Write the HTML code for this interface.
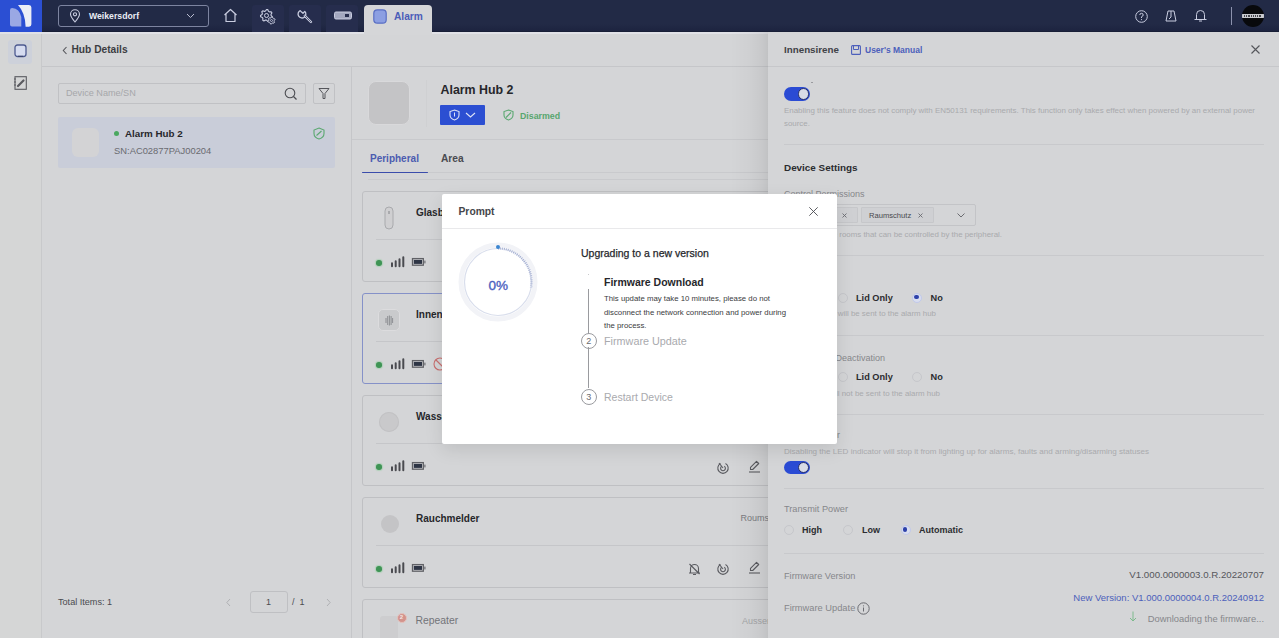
<!DOCTYPE html>
<html><head><meta charset="utf-8">
<style>
*{box-sizing:border-box;margin:0;padding:0}
html,body{width:1279px;height:638px;overflow:hidden;background:#d4d5d7;font-family:"Liberation Sans",sans-serif;color:#2b2c30}
.a{position:absolute}
.t{position:absolute;white-space:nowrap;line-height:1}
svg{position:absolute;overflow:visible}
.hdr{left:0;top:0;width:1279px;height:32px;background:linear-gradient(#222a46 0,#222a46 75%,#1d2440 95%,#161c32 100%)}
.logo{left:0;top:0;width:42px;height:32px;background:#2b4fd3}
.htab{top:5px;width:32px;height:27px;background:#262d4d;border-radius:3px 3px 0 0}
.side{left:0;top:32px;width:42px;height:606px;background:#d5d6d6;border-right:1px solid #c8c9cb}
.hl{position:absolute;height:1px;background:#c5c6c9}
.vl{position:absolute;width:1px;background:#c5c6c9}
.card{position:absolute;left:362px;width:440px;height:91px;border:1px solid #bfc0c3;border-radius:3px}
.drawer{left:768px;top:32px;width:511px;height:606px;background:#d4d5d7}
.dshadow{left:730px;top:32px;width:38px;height:606px;background:linear-gradient(to right,rgba(0,0,0,0),rgba(0,0,0,0.025) 50%,rgba(0,0,0,0.06) 85%,rgba(0,0,0,0.09))}
.modal{left:442px;top:193.6px;width:395px;height:250.8px;background:#fff;border-radius:2px;box-shadow:0 6px 18px rgba(0,0,0,0.10)}
.radio{position:absolute;width:10px;height:10px;border-radius:50%;border:1px solid #c6c7cb;margin:0.5px}
.radio.on{border:1.5px solid #c1c9ea;background:#d9deef}
.radio.on:after{content:"";position:absolute;left:1.25px;top:1.25px;width:4.5px;height:4.5px;border-radius:50%;background:#2d41aa}
.tog{position:absolute;width:26.5px;height:13.5px;border-radius:7px;background:#2a4bd4}
.tog:after{content:"";position:absolute;right:1px;top:1px;width:11.5px;height:11.5px;box-sizing:border-box;border-radius:50%;background:#d8dbe6;border:1px solid #27306a}
.gdot{position:absolute;width:5px;height:5px;border-radius:50%;background:#4aa860}
.help{color:#a9aaad;font-size:6.5px}
.lbl{color:#86878b;font-size:9.2px}
.opt{color:#2b2c30;font-size:8.6px;font-weight:bold}
</style></head><body>
<!-- ============ HEADER ============ -->
<div class="a hdr"></div>
<div class="a logo"></div>
<svg style="left:0;top:0" width="42" height="32" viewBox="0 0 42 32">
  <path d="M10 26.4 L10 10.2 Q10 8 12.2 8 Q19.5 8.6 21.3 17 L21.3 26.4 L12 26.4 Q10 26.4 10 24.5 Z" fill="#9aa8e4"/>
  <path d="M18 5 L29 5 Q31.4 5 31.4 7.5 L31.4 24.3 Q31.4 26.7 29 26.7 L25.6 26.7 Q25.4 13 18 5 Z" fill="#eceef6"/>
</svg>
<div class="a" style="left:58px;top:5px;width:151px;height:22px;border:1px solid #7d84a0;border-radius:3px"></div>
<svg style="left:69px;top:9px" width="12" height="14" viewBox="0 0 12 14">
  <path d="M6 13 C3 9.5 1.5 7.5 1.5 5.3 A4.5 4.5 0 0 1 10.5 5.3 C10.5 7.5 9 9.5 6 13 Z" fill="none" stroke="#c9cde0" stroke-width="1.1"/>
  <circle cx="6" cy="5.3" r="1.6" fill="none" stroke="#c9cde0" stroke-width="1.1"/>
</svg>
<div class="t" style="left:89px;top:12px;font-size:8.7px;font-weight:bold;color:#eceef5">Weikersdorf</div>
<svg style="left:186px;top:13px" width="9" height="6" viewBox="0 0 9 6"><path d="M1 1 L4.5 4.5 L8 1" fill="none" stroke="#b9bdd0" stroke-width="1"/></svg>

<svg style="left:223px;top:8px" width="15" height="15" viewBox="0 0 15 15">
  <path d="M1.5 7 L7.5 1.5 L13.5 7 M3 6 L3 13.5 L12 13.5 L12 6" fill="none" stroke="#c9cde0" stroke-width="1.2" stroke-linejoin="round"/>
</svg>
<div class="a htab" style="left:252px"></div>
<div class="a htab" style="left:289px"></div>
<div class="a htab" style="left:326px"></div>
<svg style="left:260px;top:9px" width="16" height="16" viewBox="0 0 16 16">
  <path d="M11.10 6.50 L12.35 7.84 L11.91 9.10 L10.10 9.37 L9.37 10.10 L9.10 11.91 L7.84 12.35 L6.50 11.10 L5.48 10.98 L3.90 11.91 L2.76 11.19 L2.90 9.37 L2.36 8.50 L0.65 7.84 L0.50 6.50 L2.02 5.48 L2.36 4.50 L1.81 2.76 L2.76 1.81 L4.50 2.36 L5.48 2.02 L6.50 0.50 L7.84 0.65 L8.50 2.36 L9.37 2.90 L11.19 2.76 L11.91 3.90 L10.98 5.48 Z" fill="none" stroke="#c9cde0" stroke-width="1.1" stroke-linejoin="round"/>
  <circle cx="6.5" cy="6.5" r="2" fill="none" stroke="#c9cde0" stroke-width="1"/>
  <path d="M14.08 12.30 L14.55 13.42 L13.95 14.14 L12.76 13.89 L12.10 14.13 L11.36 15.10 L10.44 14.94 L10.06 13.79 L9.52 13.33 L8.32 13.18 L7.99 12.30 L8.80 11.40 L8.92 10.70 L8.45 9.58 L9.05 8.86 L10.24 9.11 L10.90 8.87 L11.64 7.90 L12.56 8.06 L12.94 9.21 L13.48 9.67 L14.68 9.82 L15.01 10.70 L14.20 11.60 Z" fill="#262d4d" stroke="#c9cde0" stroke-width="1" stroke-linejoin="round"/>
  <circle cx="11.5" cy="11.5" r="1" fill="none" stroke="#c9cde0" stroke-width="0.8"/>
</svg>
<svg style="left:298px;top:9px" width="15" height="15" viewBox="0 0 15 15">
  <path d="M2.2 1.6 A3.9 3.9 0 1 0 6.8 2.4 L5 4.3 L3.6 3.1 Z" fill="none" stroke="#c9cde0" stroke-width="1.3" stroke-linejoin="round"/>
  <path d="M6.8 6.8 L13 13" stroke="#c9cde0" stroke-width="2.4" stroke-linecap="round"/>
  <path d="M6.8 6.8 L13 13" stroke="#262d4d" stroke-width="0.7" stroke-linecap="round"/>
</svg>
<svg style="left:334px;top:11px" width="18" height="9" viewBox="0 0 18 9">
  <rect x="0.5" y="1" width="17" height="7" rx="1.5" fill="#a3a8bf" stroke="#c9cde0" stroke-width="1"/>
  <rect x="11" y="3" width="4" height="3" fill="#262d4d"/>
</svg>
<div class="a" style="left:364px;top:5px;width:68px;height:30px;background:#d5d6d8;border-radius:4px 4px 0 0;z-index:2"></div>
<svg style="left:373px;top:9px;z-index:3" width="14" height="15" viewBox="0 0 14 15">
  <rect x="0.8" y="0.8" width="12.4" height="13.4" rx="3.5" fill="#8c9fe2" stroke="#5a6fc4" stroke-width="1.2"/>
</svg>
<div class="t" style="z-index:3;left:394px;top:12.2px;font-size:10.2px;font-weight:bold;color:#4b5db8">Alarm</div>

<svg style="left:1135px;top:10px" width="13" height="13" viewBox="0 0 13 13">
  <circle cx="6.5" cy="6.5" r="5.8" fill="none" stroke="#c9cde0" stroke-width="1"/>
  <path d="M4.8 5 Q4.8 3.3 6.5 3.3 Q8.2 3.3 8.2 5 Q8.2 6.2 6.5 6.8 L6.5 8" fill="none" stroke="#c9cde0" stroke-width="1"/>
  <circle cx="6.5" cy="9.6" r="0.6" fill="#c9cde0"/>
</svg>
<svg style="left:1165px;top:10px" width="12" height="12" viewBox="0 0 12 12">
  <path d="M3 1 L9 1 L11 11 L1 11 Z M6 1 L6 7 L4 9" fill="none" stroke="#c9cde0" stroke-width="1"/>
</svg>
<svg style="left:1194px;top:8.3px" width="13" height="14" viewBox="0 0 13 14">
  <path d="M2.5 11 L2.5 6.5 A4 4 0 0 1 10.5 6.5 L10.5 11 M0.5 11.5 L12.5 11.5 M5 13 L8 13" fill="none" stroke="#c9cde0" stroke-width="1"/>
</svg>
<div class="a" style="left:1231px;top:7px;width:1px;height:18px;background:#8c92ad"></div>
<div class="a" style="left:1242px;top:5px;width:22px;height:22px;border-radius:50%;background:#08090c;overflow:hidden">
  <div class="a" style="left:0;top:8.5px;width:22px;height:4.5px;background:#c9cacf"></div><div class="a" style="left:2px;top:9.8px;width:18px;height:2px;background:repeating-linear-gradient(to right,#45464c 0,#45464c 1.2px,transparent 1.2px,transparent 2.2px)"></div>
</div>

<!-- ============ SIDEBAR ============ -->
<div class="a side"></div>
<div class="a" style="left:0;top:32px;width:1279px;height:2px;background:#e0e1e6"></div>
<div class="a" style="left:8px;top:40px;width:24px;height:24px;border-radius:3px;background:#cdd1da"></div>
<svg style="left:14px;top:44px" width="13" height="13" viewBox="0 0 13 13">
  <rect x="1" y="1" width="11" height="11.5" rx="2.5" fill="#d6dcf0" stroke="#4d5a90" stroke-width="1.3"/><path d="M4 12.4 L9 12.4" stroke="#3d4770" stroke-width="1.2"/>
</svg>
<svg style="left:14px;top:76px" width="13" height="14" viewBox="0 0 13 14">
  <rect x="1" y="0.7" width="11.3" height="12.6" fill="none" stroke="#5a5b60" stroke-width="1.1"/>
  <path d="M4 10 L9.5 4.5" stroke="#5a5b60" stroke-width="2.2" stroke-linecap="round"/>
  <path d="M0 3 L2 3 M0 6 L2 6 M0 9 L2 9" stroke="#5a5b60" stroke-width="1"/>
</svg>

<!-- ============ MAIN ============ -->
<svg style="left:62px;top:45.5px" width="6" height="9" viewBox="0 0 6 9"><path d="M4.5 1 L1.3 4.5 L4.5 8" fill="none" stroke="#55565b" stroke-width="1.1"/></svg>
<div class="t" style="left:71.5px;top:44.5px;font-size:10.2px;font-weight:bold;color:#3c3d42">Hub Details</div>
<div class="hl" style="left:42px;top:66px;width:726px"></div>
<div class="vl" style="left:351px;top:67px;height:571px"></div>

<!-- search -->
<div class="a" style="left:58px;top:83px;width:248px;height:21px;border:1px solid #c0c1c4;border-radius:2px"></div>
<div class="t" style="left:66px;top:89px;font-size:9.1px;color:#a6a7aa">Device Name/SN</div>
<svg style="left:284px;top:87px" width="14" height="14" viewBox="0 0 14 14"><circle cx="6" cy="6" r="4.8" fill="none" stroke="#4c4d52" stroke-width="1.1"/><path d="M9.5 9.5 L12.5 12.5" stroke="#4c4d52" stroke-width="1.2"/></svg>
<div class="a" style="left:313px;top:83px;width:22px;height:21px;border:1px solid #c0c1c4;border-radius:2px"></div>
<svg style="left:318px;top:87px" width="12" height="13" viewBox="0 0 12 13"><path d="M1 1.5 L11 1.5 L7 6.5 L7 11.5 L5 11.5 L5 6.5 Z" fill="none" stroke="#55565b" stroke-width="1" stroke-linejoin="round"/></svg>

<!-- hub list item -->
<div class="a" style="left:58px;top:117px;width:277px;height:51px;background:#c9cdd9;border-radius:2px"></div>
<div class="a" style="left:72px;top:128px;width:27px;height:29px;border-radius:6px;background:#d3d3d5"></div>
<div class="gdot" style="left:113.5px;top:131px"></div>
<div class="t" style="left:125px;top:129px;font-size:9.8px;font-weight:bold;color:#26272b">Alarm Hub 2</div>
<div class="t" style="left:114px;top:146px;font-size:9.4px;color:#6a6b70">SN:AC02877PAJ00204</div>
<svg style="left:313px;top:127px" width="12" height="13" viewBox="0 0 12 13"><path d="M6 1 L11 3 L11 6.5 Q11 10.5 6 12 Q1 10.5 1 6.5 L1 3 Z M3.5 8.5 L8.5 4" fill="none" stroke="#5aa870" stroke-width="1.1"/></svg>

<!-- pagination -->
<div class="t" style="left:58px;top:598.3px;font-size:9.1px;color:#4a4b50">Total Items: 1</div>
<svg style="left:225px;top:598px" width="7" height="9" viewBox="0 0 7 9"><path d="M5 1 L1.8 4.5 L5 8" fill="none" stroke="#b0b1b4" stroke-width="1"/></svg>
<div class="a" style="left:250px;top:591px;width:38px;height:22px;border:1px solid #bfc0c3;border-radius:3px"></div>
<div class="t" style="left:266px;top:598.3px;font-size:9px;color:#4a4b50">1</div>
<div class="t" style="left:292px;top:598.3px;font-size:9px;color:#4a4b50">/&nbsp;&nbsp;1</div>
<svg style="left:325px;top:598px" width="7" height="9" viewBox="0 0 7 9"><path d="M2 1 L5.2 4.5 L2 8" fill="none" stroke="#b0b1b4" stroke-width="1"/></svg>

<!-- hub header -->
<div class="a" style="left:367.5px;top:80.5px;width:42px;height:44px;border-radius:8px;background:#c4c4c6;border:1px solid #d9d9db"></div>
<div class="vl" style="left:426px;top:80px;height:47px;background:#cfd0d2"></div>
<div class="t" style="left:440.5px;top:84px;font-size:12.4px;font-weight:bold;color:#26272b">Alarm Hub 2</div>
<div class="a" style="left:440px;top:105px;width:45px;height:20px;background:#2c4fd2;border-radius:1px"></div>
<svg style="left:449px;top:109px" width="28" height="12" viewBox="0 0 28 12"><path d="M5.5 1 L10 2.6 L10 6 Q10 9.5 5.5 11 Q1 9.5 1 6 L1 2.6 Z" fill="none" stroke="#dfe4f7" stroke-width="1.1"/><path d="M5.5 3.5 L5.5 7.5" stroke="#dfe4f7" stroke-width="1"/><path d="M17 4 L21.5 8 L26 4" fill="none" stroke="#dfe4f7" stroke-width="1.1"/></svg>
<svg style="left:503px;top:109px" width="11" height="12" viewBox="0 0 11 12"><path d="M5.5 1 L10 2.6 L10 6 Q10 9.5 5.5 11 Q1 9.5 1 6 L1 2.6 Z M3 8.5 L8 3.5" fill="none" stroke="#5aa870" stroke-width="1.1"/></svg>
<div class="t" style="left:520px;top:111.7px;font-size:8.8px;font-weight:bold;color:#58a66e">Disarmed</div>
<div class="hl" style="left:352px;top:139px;width:416px;background:#c8c9cc"></div>

<!-- tabs -->
<div class="t" style="left:370px;top:153.5px;font-size:10px;font-weight:bold;color:#4b5cb0">Peripheral</div>
<div class="t" style="left:441px;top:153.5px;font-size:10.2px;font-weight:bold;color:#4a4b50">Area</div>
<div class="hl" style="left:362px;top:172px;width:406px;background:#c9cacd"></div>
<div class="a" style="left:362px;top:171.7px;width:66px;height:1.8px;border-radius:1px;background:#3a4cab"></div>
<div class="hl" style="left:368px;top:179px;width:400px;background:#c9cacd"></div>

<!-- cards -->
<div class="card" style="top:191px"></div>
<div class="hl" style="left:376px;top:239px;width:400px"></div>
<svg style="left:384px;top:206px" width="10" height="24" viewBox="0 0 10 24"><rect x="1" y="1" width="8" height="22" rx="4" fill="#cfcfd1" stroke="#a9aaad" stroke-width="1"/><rect x="4" y="5" width="2" height="3" fill="#a9aaad"/></svg>
<div class="t" style="left:416px;top:208.2px;font-size:10px;font-weight:bold;color:#26272b">Glasbruchmelder</div>
<div class="gdot" style="left:376.2px;top:260.3px;width:5.5px;height:5.5px;background:#3f9455;box-shadow:0 0 1px 1px rgba(110,200,130,0.35)"></div><svg style="left:390px;top:255px" width="38" height="14" viewBox="0 0 38 14"><path d="M2 11.2 L2 8.2 M5.7 11.2 L5.7 6.3 M9.5 11.2 L9.5 4.2 M13.3 11.2 L13.3 2.2" stroke="#4a4b50" stroke-width="2" stroke-linecap="round"/><rect x="22.5" y="3.6" width="10.8" height="6.6" fill="none" stroke="#606166" stroke-width="1.3"/><rect x="23.8" y="4.9" width="8.2" height="4" fill="#2e3545"/><rect x="34" y="5.6" width="1.7" height="2.8" fill="#8a8b8f"/></svg>


<div class="card" style="top:293px;border-color:#8591c8"></div>
<div class="hl" style="left:376px;top:341px;width:400px"></div>
<div class="a" style="left:378px;top:309px;width:22px;height:22px;border-radius:5px;background:#c9cacc;border:1px solid #dcdcde"></div>
<svg style="left:383px;top:313px" width="12" height="14" viewBox="0 0 12 14"><path d="M3 5 L3 10 M4.7 3 L4.7 12 M6.4 2.5 L6.4 12.5 M8.1 3 L8.1 12 M9.6 5 L9.6 10" stroke="#7e7f84" stroke-width="0.8"/></svg>
<div class="t" style="left:416px;top:310.2px;font-size:10px;font-weight:bold;color:#26272b">Innensirene</div>
<div class="gdot" style="left:376.2px;top:362.3px;width:5.5px;height:5.5px;background:#3f9455;box-shadow:0 0 1px 1px rgba(110,200,130,0.35)"></div><svg style="left:390px;top:357px" width="38" height="14" viewBox="0 0 38 14"><path d="M2 11.2 L2 8.2 M5.7 11.2 L5.7 6.3 M9.5 11.2 L9.5 4.2 M13.3 11.2 L13.3 2.2" stroke="#4a4b50" stroke-width="2" stroke-linecap="round"/><rect x="22.5" y="3.6" width="10.8" height="6.6" fill="none" stroke="#606166" stroke-width="1.3"/><rect x="23.8" y="4.9" width="8.2" height="4" fill="#2e3545"/><rect x="34" y="5.6" width="1.7" height="2.8" fill="#8a8b8f"/></svg>

<svg style="left:433px;top:357px" width="14" height="14" viewBox="0 0 14 14"><circle cx="7" cy="7" r="6" fill="none" stroke="#c86e6e" stroke-width="1.1"/><path d="M3 3 L11 11" stroke="#c86e6e" stroke-width="1.1"/></svg>

<div class="card" style="top:395px"></div>
<div class="hl" style="left:376px;top:443px;width:400px"></div>
<div class="a" style="left:379px;top:412px;width:20px;height:20px;border-radius:50%;background:#c9c9cb;box-shadow:inset 0 0 0 1px #c2c2c4"></div>
<div class="t" style="left:416px;top:412.2px;font-size:10px;font-weight:bold;color:#26272b">Wassermelder</div>
<div class="gdot" style="left:376.2px;top:464.3px;width:5.5px;height:5.5px;background:#3f9455;box-shadow:0 0 1px 1px rgba(110,200,130,0.35)"></div><svg style="left:390px;top:459px" width="38" height="14" viewBox="0 0 38 14"><path d="M2 11.2 L2 8.2 M5.7 11.2 L5.7 6.3 M9.5 11.2 L9.5 4.2 M13.3 11.2 L13.3 2.2" stroke="#4a4b50" stroke-width="2" stroke-linecap="round"/><rect x="22.5" y="3.6" width="10.8" height="6.6" fill="none" stroke="#606166" stroke-width="1.3"/><rect x="23.8" y="4.9" width="8.2" height="4" fill="#2e3545"/><rect x="34" y="5.6" width="1.7" height="2.8" fill="#8a8b8f"/></svg>


<div class="card" style="top:497px"></div>
<div class="hl" style="left:376px;top:545px;width:400px"></div>
<div class="a" style="left:381px;top:515px;width:18px;height:18px;border-radius:50%;background:#c4c4c6"></div>
<div class="t" style="left:416px;top:514.2px;font-size:10px;font-weight:bold;color:#26272b">Rauchmelder</div>
<div class="t" style="left:740.5px;top:514px;font-size:9px;color:#7a7b80">Roumschutz</div>
<div class="gdot" style="left:376.2px;top:566.3px;width:5.5px;height:5.5px;background:#3f9455;box-shadow:0 0 1px 1px rgba(110,200,130,0.35)"></div><svg style="left:390px;top:561px" width="38" height="14" viewBox="0 0 38 14"><path d="M2 11.2 L2 8.2 M5.7 11.2 L5.7 6.3 M9.5 11.2 L9.5 4.2 M13.3 11.2 L13.3 2.2" stroke="#4a4b50" stroke-width="2" stroke-linecap="round"/><rect x="22.5" y="3.6" width="10.8" height="6.6" fill="none" stroke="#606166" stroke-width="1.3"/><rect x="23.8" y="4.9" width="8.2" height="4" fill="#2e3545"/><rect x="34" y="5.6" width="1.7" height="2.8" fill="#8a8b8f"/></svg>


<div class="card" style="top:599px"></div>
<div class="a" style="left:380px;top:616px;width:18px;height:26px;border-radius:3px;background:#cdcdcf"></div>
<div class="a" style="left:396.5px;top:612.5px;width:10px;height:10px;border-radius:50%;background:#d3938c;border:1.5px solid #e3c1bc;color:#f4e6e4;font-size:6px;line-height:7px;text-align:center;font-weight:bold">2</div>
<div class="t" style="left:415.5px;top:615.8px;font-size:10.4px;color:#737479">Repeater</div>
<div class="t" style="left:742px;top:616.5px;font-size:9px;color:#a4a5a8">Aussen</div>


<svg style="left:716px;top:462px" width="14" height="12" viewBox="0 0 14 12"><path d="M4.5 1.6 A5.2 5.2 0 1 0 9.5 1.6" fill="none" stroke="#5a5b60" stroke-width="1.1"/><path d="M5.7 4.3 A2.4 2.4 0 1 0 8.3 4.3" fill="none" stroke="#5a5b60" stroke-width="1.1"/><path d="M3 1 L7 6" stroke="#5a5b60" stroke-width="1.1"/></svg><svg style="left:748px;top:460px" width="13" height="13" viewBox="0 0 13 13"><path d="M2.5 9.5 L2.5 7.3 L8.5 1.3 L10.7 3.5 L4.7 9.5 Z" fill="none" stroke="#5a5b60" stroke-width="1.1" stroke-linejoin="round"/><path d="M1 12 L12 12" stroke="#5a5b60" stroke-width="1.1"/></svg><svg style="left:688px;top:563px" width="13" height="12" viewBox="0 0 13 12"><path d="M2.5 9.5 L2.5 5.5 A4 4 0 0 1 10.5 5.5 L10.5 9.5 M1 10 L12 10 M5 11.5 L8 11.5 M1.5 1 L11.5 11" fill="none" stroke="#5a5b60" stroke-width="1.1"/></svg><svg style="left:716px;top:563px" width="14" height="12" viewBox="0 0 14 12"><path d="M4.5 1.6 A5.2 5.2 0 1 0 9.5 1.6" fill="none" stroke="#5a5b60" stroke-width="1.1"/><path d="M5.7 4.3 A2.4 2.4 0 1 0 8.3 4.3" fill="none" stroke="#5a5b60" stroke-width="1.1"/><path d="M3 1 L7 6" stroke="#5a5b60" stroke-width="1.1"/></svg><svg style="left:748px;top:561px" width="13" height="13" viewBox="0 0 13 13"><path d="M2.5 9.5 L2.5 7.3 L8.5 1.3 L10.7 3.5 L4.7 9.5 Z" fill="none" stroke="#5a5b60" stroke-width="1.1" stroke-linejoin="round"/><path d="M1 12 L12 12" stroke="#5a5b60" stroke-width="1.1"/></svg>
<!-- ============ DRAWER ============ -->
<div class="a dshadow"></div>
<div class="a drawer"></div>
<div class="t" style="left:784px;top:45.2px;font-size:9.8px;font-weight:bold;color:#414247">Innensirene</div>
<svg style="left:851px;top:45px" width="10" height="10" viewBox="0 0 10 10"><rect x="0.6" y="0.6" width="8.8" height="8.8" rx="1" fill="none" stroke="#4c5fbb" stroke-width="1.1"/><path d="M2.5 0.6 L2.5 4.5 L7.5 4.5 L7.5 0.6" fill="none" stroke="#4c5fbb" stroke-width="1"/></svg>
<div class="t" style="left:865px;top:46px;font-size:8.5px;font-weight:bold;color:#4c5fbb">User's Manual</div>
<svg style="left:1251px;top:45px" width="9" height="9" viewBox="0 0 9 9"><path d="M0.5 0.5 L8.5 8.5 M8.5 0.5 L0.5 8.5" stroke="#55565b" stroke-width="1.1"/></svg>
<div class="hl" style="left:768px;top:66px;width:511px;background:#c6c7ca"></div>

<div class="tog" style="left:783.8px;top:87.4px"></div>
<div class="a" style="left:811px;top:82px;width:2px;height:1px;background:#9a9b9f"></div>
<div class="t help" style="left:784px;top:107px;font-size:7.95px;color:#a9aaad">Enabling this feature does not comply with EN50131 requirements. This function only takes effect when powered by an external power</div>
<div class="t help" style="left:784px;top:120.3px;font-size:7.9px;color:#a9aaad">source.</div>
<div class="hl" style="left:784px;top:144px;width:480px;background:#c8c9cc"></div>

<div class="t" style="left:784px;top:163.1px;font-size:9.9px;font-weight:bold;color:#2b2c30">Device Settings</div>
<div class="t lbl" style="left:784px;top:190.4px;font-size:9px">Control Permissions</div>
<div class="a" style="left:784px;top:204px;width:192px;height:22px;border:1px solid #c3c4c7;border-radius:2px"></div>
<div class="a" style="left:788px;top:207px;width:70px;height:16px;border:1px solid #c6c7ca;background:#cfd0d3;border-radius:1px"></div>
<div class="a" style="left:861px;top:207px;width:73px;height:16px;border:1px solid #c6c7ca;background:#cfd0d3;border-radius:1px"></div>
<div class="t" style="left:869px;top:211.5px;font-size:7.6px;color:#48494e">Raumschutz</div>
<svg style="left:841.5px;top:212.5px" width="5" height="5" viewBox="0 0 5 5"><path d="M0.5 0.5 L4.5 4.5 M4.5 0.5 L0.5 4.5" stroke="#6a6b70" stroke-width="0.9"/></svg>
<svg style="left:918px;top:212.5px" width="5" height="5" viewBox="0 0 5 5"><path d="M0.5 0.5 L4.5 4.5 M4.5 0.5 L0.5 4.5" stroke="#6a6b70" stroke-width="0.9"/></svg>
<svg style="left:957px;top:213px" width="8" height="5" viewBox="0 0 8 5"><path d="M0.5 0.5 L4 4 L7.5 0.5" fill="none" stroke="#6a6b70" stroke-width="1"/></svg>
<div class="t help" style="right:277px;top:231px;font-size:7.9px;color:#a9aaad">Select the rooms that can be controlled by the peripheral.</div>
<div class="hl" style="left:784px;top:255px;width:480px;background:#c8c9cc"></div>

<div class="t lbl" style="left:784px;top:272px;font-size:9px">Tamper</div>
<div class="radio" style="left:784px;top:292px"></div>
<div class="t opt" style="left:802px;top:293.6px">All</div>
<div class="radio" style="left:837.5px;top:292px"></div>
<div class="t opt" style="left:856px;top:293.6px;font-size:9.2px">Lid Only</div>
<div class="radio on" style="left:911.5px;top:292px"></div>
<div class="t opt" style="left:930.5px;top:293.6px;font-size:9.2px">No</div>
<div class="t help" style="right:343px;top:310.3px;font-size:7.9px;color:#a9aaad">Alarms will be sent to the alarm hub</div>
<div class="hl" style="left:784px;top:335px;width:480px;background:#c8c9cc"></div>

<div class="t lbl" style="right:394px;top:354px;font-size:9px">Tamper Alarm Deactivation</div>
<div class="radio" style="left:784px;top:371.5px"></div>
<div class="t opt" style="left:802px;top:373px">All</div>
<div class="radio" style="left:837.5px;top:371.5px"></div>
<div class="t opt" style="left:856px;top:373px;font-size:9.2px">Lid Only</div>
<div class="radio" style="left:911.5px;top:371.5px"></div>
<div class="t opt" style="left:930.5px;top:373px;font-size:9.2px">No</div>
<div class="t help" style="right:339px;top:390.3px;font-size:7.9px;color:#a9aaad">Alarms will not be sent to the alarm hub</div>
<div class="hl" style="left:784px;top:414px;width:480px;background:#c8c9cc"></div>

<div class="t lbl" style="right:439px;top:431px;font-size:9px">LED Indicator</div>
<div class="t help" style="left:784px;top:448px;font-size:8.05px;color:#a9aaad">Disabling the LED indicator will stop it from lighting up for alarms, faults and arming/disarming statuses</div>
<div class="tog" style="left:783.5px;top:460.8px"></div>
<div class="hl" style="left:784px;top:488px;width:480px;background:#c8c9cc"></div>

<div class="t lbl" style="left:784px;top:504.8px;font-size:9.2px">Transmit Power</div>
<div class="radio" style="left:783.5px;top:524.5px"></div>
<div class="t opt" style="left:802px;top:526px;font-size:9px">High</div>
<div class="radio" style="left:842.7px;top:524.5px"></div>
<div class="t opt" style="left:862px;top:526px;font-size:9px">Low</div>
<div class="radio on" style="left:900px;top:524.5px"></div>
<div class="t opt" style="left:919px;top:526px;font-size:9px">Automatic</div>
<div class="hl" style="left:784px;top:553px;width:480px;background:#c8c9cc"></div>

<div class="t lbl" style="left:784px;top:572px;font-size:9.2px">Firmware Version</div>
<div class="t" style="right:15px;top:570.3px;font-size:9.7px;color:#56575c">V1.000.0000003.0.R.20220707</div>
<div class="t lbl" style="left:784px;top:603.6px;font-size:9.3px">Firmware Update</div>
<svg style="left:857px;top:601.5px" width="13" height="13" viewBox="0 0 13 13"><circle cx="6.5" cy="6.5" r="5.7" fill="none" stroke="#6a6b70" stroke-width="1"/><path d="M6.5 5.5 L6.5 9.5" stroke="#6a6b70" stroke-width="1"/><circle cx="6.5" cy="3.8" r="0.6" fill="#6a6b70"/></svg>
<div class="t" style="right:15px;top:593.4px;font-size:9.5px;color:#4c5fbb">New Version: V1.000.0000004.0.R.20240912</div>
<svg style="left:1129px;top:611px" width="8" height="11" viewBox="0 0 8 11"><path d="M4 0.5 L4 10 M1 7 L4 10 L7 7" fill="none" stroke="#7cba8c" stroke-width="1"/></svg>
<div class="t" style="right:15px;top:613.8px;font-size:9.4px;color:#86878b">Downloading the firmware...</div>

<!-- ============ MODAL ============ -->
<div class="a modal"></div>
<div class="t" style="left:458.5px;top:206.6px;font-size:10.3px;font-weight:bold;color:#45464b">Prompt</div>
<svg style="left:808.5px;top:207px" width="9" height="9" viewBox="0 0 9 9"><path d="M0.3 0.3 L8.7 8.7 M8.7 0.3 L0.3 8.7" stroke="#4a4b50" stroke-width="0.9"/></svg>
<div class="hl" style="left:442px;top:228px;width:395px;background:#e9e9eb"></div>

<svg style="left:458px;top:242px" width="80" height="80" viewBox="0 0 80 80">
  <circle cx="40" cy="40" r="37" fill="none" stroke="#f2f3f7" stroke-width="5"/>
  <circle cx="40" cy="40" r="33.5" fill="none" stroke="#d9deec" stroke-width="1.2"/>
  <path d="M40 6.5 A33.5 33.5 0 0 1 72.99 45.82" fill="none" stroke="#97a3cb" stroke-width="2.4" stroke-dasharray="0.7 1.3"/>
  <circle cx="40" cy="5" r="2" fill="#3b86d0"/>
</svg>
<div class="t" style="left:488.5px;top:279.1px;font-size:13.5px;color:#4a5ec0;-webkit-text-stroke:0.35px #4a5ec0">0%</div>

<div class="t" style="left:581px;top:247.6px;font-size:10.5px;color:#26272b;-webkit-text-stroke:0.25px #26272b">Upgrading to a new version</div>
<div class="a" style="left:588px;top:289px;width:1px;height:45px;background:#9a9b9f"></div>
<div class="a" style="left:588px;top:347px;width:1px;height:41px;background:#9a9b9f"></div>
<div class="a" style="left:588px;top:273.5px;width:1px;height:1px;background:#c8c9cc"></div>
<div class="a" style="left:580.7px;top:332.5px;width:16px;height:16px;border:1px solid #9a9b9f;border-radius:50%;font-size:9px;line-height:14px;text-align:center;color:#6a6b70">2</div>
<div class="a" style="left:580.7px;top:388.7px;width:16px;height:16px;border:1px solid #9a9b9f;border-radius:50%;font-size:9px;line-height:14px;text-align:center;color:#6a6b70">3</div>
<div class="t" style="left:604px;top:276.9px;font-size:10.5px;font-weight:bold;color:#26272b">Firmware Download</div>
<div class="a" style="left:604px;top:292px;width:260px;font-size:7.8px;line-height:13.6px;color:#3a3b40;white-space:nowrap">This update may take 10 minutes, please do not<br>disconnect the network connection and power during<br>the process.</div>
<div class="t" style="left:604px;top:335.8px;font-size:10.8px;color:#a9aaae">Firmware Update</div>
<div class="t" style="left:604px;top:391.5px;font-size:10.5px;color:#a9aaae">Restart Device</div>
</body></html>
